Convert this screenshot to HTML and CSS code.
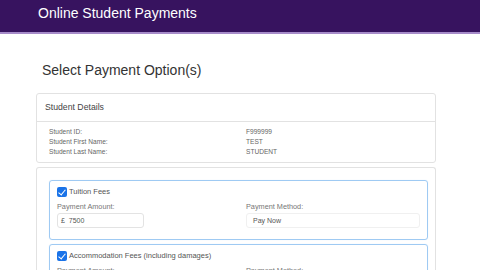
FILE: index.html
```html
<!DOCTYPE html>
<html lang="en">
<head>
    <meta charset="UTF-8">
    <title>Online Student Payments</title>
    <link rel="stylesheet" href="styles.css">
</head>
<body>
    <header class="topbar">
        <span class="brand">Online Student Payments</span>
    </header>

    <main class="page">
        <h1 class="page-title">Select Payment Option(s)</h1>

        <section class="card">
            <div class="card-head">Student Details</div>
            <div class="card-body details">
                <span>Student ID:</span><span>F999999</span>
                <span>Student First Name:</span><span>TEST</span>
                <span>Student Last Name:</span><span>STUDENT</span>
            </div>
        </section>

        <section class="card options">
            <div class="option">
                <label class="option-check">
                    <span class="tick"></span>
                    Tuition Fees
                </label>
                <div class="option-fields">
                    <div class="field">
                        <span class="field-label">Payment Amount:</span>
                        <div class="field-input amount">£&nbsp; 7500</div>
                    </div>
                    <div class="field">
                        <span class="field-label">Payment Method:</span>
                        <div class="field-input method">Pay Now</div>
                    </div>
                </div>
            </div>

            <div class="option">
                <label class="option-check">
                    <span class="tick"></span>
                    Accommodation Fees (including damages)
                </label>
                <div class="option-fields">
                    <div class="field">
                        <span class="field-label">Payment Amount:</span>
                        <div class="field-input amount">£&nbsp; 2500</div>
                    </div>
                    <div class="field">
                        <span class="field-label">Payment Method:</span>
                        <div class="field-input method">Pay Now</div>
                    </div>
                </div>
            </div>
        </section>
    </main>
</body>
</html>
```

FILE: styles.css
```css
* {
    margin: 0;
    padding: 0;
    box-sizing: border-box;
    font-family: 'Liberation Sans', Arial, sans-serif;
}

body {
    background: #fff;
    color: #333;
    overflow: hidden;
}

.topbar {
    height: 34px;
    background: #37135f;
    border-bottom: 2px solid #a68bc9;
    padding: 4px 0 0 38px;
}

.brand {
    color: #fff;
    font-size: 14px;
    line-height: 18px;
}

.page {
    width: 436px;
    padding-left: 36px;
}

.page-title {
    font-size: 14px;
    font-weight: normal;
    color: #333;
    margin: 27px 0 14px 6px;
    line-height: 18px;
}

.card {
    border: 1px solid #e2e2e2;
    border-radius: 3px;
    margin-bottom: 4px;
}

.card-head {
    height: 28px;
    line-height: 26px;
    padding-left: 8px;
    font-size: 8.7px;
    color: #444;
    border-bottom: 1px solid #e2e2e2;
}

.details {
    display: grid;
    grid-template-columns: 197px 1fr;
    padding: 5px 12px 5px;
    font-size: 6.6px;
    line-height: 10px;
    color: #666;
}

.options {
    padding: 12px 7px 0 12px;
    border-bottom: none;
}

.option {
    border: 1px solid #9fcaf3;
    border-radius: 3px;
    box-shadow: 0 0 1px #cfe5fa;
    padding: 5px 8px 11px 7px;
    margin-bottom: 4px;
}

.option-check {
    display: flex;
    align-items: center;
    gap: 2px;
    font-size: 7.5px;
    color: #555;
    height: 11px;
}

.tick {
    width: 10px;
    height: 10px;
    border-radius: 2px;
    background: #1a73e8;
    position: relative;
}

.tick::after {
    content: "";
    position: absolute;
    left: 3px;
    top: 1px;
    width: 3px;
    height: 6px;
    border: solid #fff;
    border-width: 0 1.5px 1.5px 0;
    transform: rotate(40deg);
}

.option-fields {
    display: grid;
    grid-template-columns: 189px 174px;
    margin-top: 5px;
}

.field {
    display: flex;
    flex-direction: column;
}

.field-label {
    font-size: 7.3px;
    line-height: 9px;
    color: #777;
    margin-bottom: 2px;
}

.field-input {
    height: 15px;
    border: 1px solid #e3e3e3;
    border-radius: 3px;
    font-size: 7px;
    line-height: 13px;
    color: #555;
    padding-left: 3px;
}

.amount {
    width: 87px;
}

.method {
    width: 174px;
    border-color: #f0f0f0;
    padding-left: 6px;
}
```
